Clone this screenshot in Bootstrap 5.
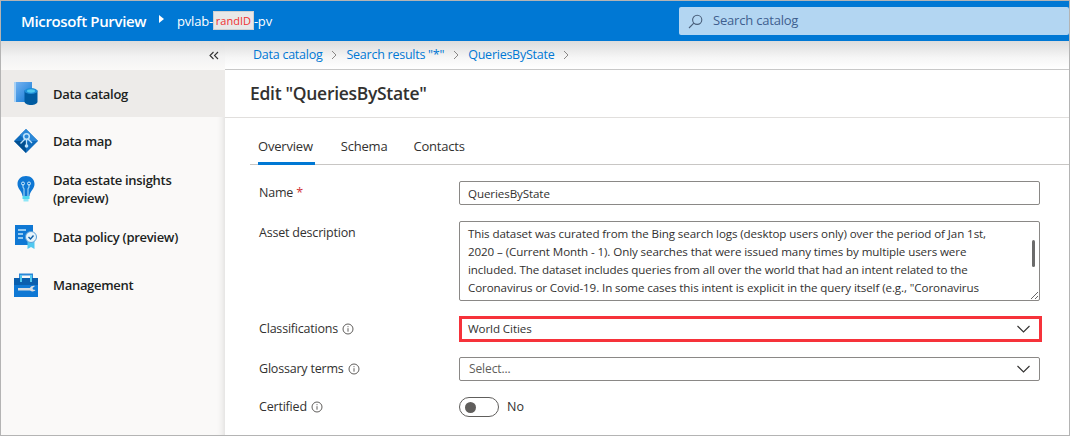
<!DOCTYPE html>
<html lang="en">
<head>
<meta charset="utf-8">
<title>Microsoft Purview</title>
<link href="https://cdn.jsdelivr.net/npm/bootstrap@5.3.0/dist/css/bootstrap.min.css" rel="stylesheet">
<style>
html,body{height:436px;overflow:hidden}
body{font-family:"Open Sans","Noto Sans",sans-serif;font-size:13px;color:#323130;background:#fff}
.frame{height:436px;border:1px solid #b4b4b4;border-bottom-width:1px;display:flex;flex-direction:column;overflow:hidden}
.topbar{height:40px;background:#0078d4;color:#fff;flex:none;padding-left:20px;position:relative;z-index:2}
.brand{font-weight:600;font-size:15px;letter-spacing:-.35px;width:136px}
.caret{width:0;height:0;border-left:5px solid #fff;border-top:4px solid transparent;border-bottom:4px solid transparent;margin:-4px 0 0 2px}
.tenant{margin-left:13px;font-size:13px;letter-spacing:-.2px}
.rand{display:inline-block;background:#e8e8e8;border:1px solid #d0d0d0;color:#f03030;font-size:11px;line-height:17px;width:41px;text-align:center;letter-spacing:0;vertical-align:1px}
.searchbox{width:390px;height:28px;margin-left:auto;background:#b3d6f2;border-radius:2px;color:#3f5f8f;font-size:13px;padding-left:9px;gap:10px;letter-spacing:-.2px}
.body-row{flex:1;min-height:0}
.sidenav{width:224px;flex:none;background:#faf9f8;box-shadow:inset -8px 0 8px -8px rgba(0,0,0,.16)}
.collapse-row{height:29px;padding-right:6px;background:linear-gradient(#dcdcdc,#f3f3f3 55%,#faf9f8);font-size:14px;color:#444}
.nav-entry{height:48px;padding-left:12px;gap:14px;color:#201f1e;font-size:13px;font-weight:600;line-height:18px;letter-spacing:-.3px}
.nav-entry svg{flex:none;width:26px;height:26px}
.nav-entry.current{background:#edebe9;height:47px}
.crumbs{height:29px;flex:none;border-bottom:1px solid #c8c8c8;background:linear-gradient(#dcdcdc,#f6f6f6 60%,#fff);padding-left:28px;gap:9px;font-size:12.5px;letter-spacing:-.25px;color:#0078d4}
.crumbs svg{flex:none}
.title-row{height:48px;flex:none;border-bottom:1px solid #e1dfdd;padding-left:25px}
.title-row h1{font-size:17.5px;font-weight:600;margin:0;color:#323130;letter-spacing:-.3px}
.tabbar{margin:6px 0 0 25px;height:41px;border-bottom:1px solid #c8c6c4;gap:26px;padding-left:8px;flex:none}
.tabitem{height:40px;line-height:44px;font-size:13px;letter-spacing:-.2px;color:#323130;margin-bottom:-1px}
.tabitem.active-tab{border-bottom:3px solid #0078d4;height:41px;padding-right:2px}
.formrow{padding-left:34px;padding-right:29px}
.flabel{width:200px;flex:none;font-size:12.5px;letter-spacing:-.2px;color:#323130}
.req{color:#d13438}
.info{margin-left:3px;flex:none}
.fieldbox{flex:1;min-width:0;position:relative}
.form-control.flat,.form-select.flat{border-radius:2px;border-color:#8a8886;font-size:11.6px;color:#323130;padding:0 8px;height:24px;min-height:0;box-shadow:none;letter-spacing:-.1px}
textarea.form-control.flat{height:80px;line-height:17.9px;padding:3px 0 0 8px;overflow:hidden;resize:both;white-space:pre}
.thumb{position:absolute;right:5px;top:19px;width:3px;height:27px;background:#6b6b6b;border-radius:2px}
.redmark{border:3px solid #f6323a;height:26px;margin:0 -2px 0 0;padding-left:6px;font-size:11.6px;letter-spacing:-.1px;padding-right:9px}
.selectrow{height:24px;border:1px solid #8a8886;border-radius:2px;padding:0 9px;font-size:12px;letter-spacing:-.1px;color:#605e5c}
.toggle{width:40px;height:20px;border:1px solid #605e5c;border-radius:10px;padding-left:5px}
.knob{width:11px;height:11px;border-radius:50%;background:#605e5c}
</style>
</head>
<body>
<div class="frame">
  <header class="topbar d-flex align-items-center">
    <div class="brand">Microsoft Purview</div>
    <span class="caret"></span>
    <div class="tenant">pvlab-<span class="rand">randID</span>-pv</div>
    <div class="searchbox d-flex align-items-center">
      <svg width="15" height="15" viewBox="0 0 15 15" fill="none" stroke="#4a5f7a" stroke-width="1.1"><circle cx="9.2" cy="5.8" r="4.6"/><path d="M5.8 9.2 1 14"/></svg>
      <span>Search catalog</span>
    </div>
  </header>
  <div class="body-row d-flex">
    <nav class="sidenav">
      <div class="collapse-row d-flex align-items-center justify-content-end">
        <svg width="10" height="9" viewBox="0 0 10 9" fill="none" stroke="#333" stroke-width="1.1"><path d="M4.5 1 1 4.5 4.5 8M9 1 5.5 4.5 9 8"/></svg>
      </div>
      <div class="nav-entry current d-flex align-items-center">
        <svg viewBox="0 0 26 26"><defs><linearGradient id="g1" x1="0" y1="0" x2="1" y2="1"><stop offset="0" stop-color="#7ab5f2"/><stop offset="1" stop-color="#0f78d4"/></linearGradient></defs><rect x="1" y="1" width="18" height="20" fill="url(#g1)"/><rect x="1" y="1" width="2" height="20" fill="#a9d2f5"/><path d="M11.500 9.500v11c0 2 3 3.500 6.500 3.500s6.500-1.500 6.500-3.500v-11z" fill="#005ba1"/><ellipse cx="18" cy="10" rx="6.500" ry="3" fill="#1f8fd8"/><ellipse cx="18" cy="10" rx="4" ry="1.700" fill="#50c8f0"/></svg>
        <span>Data catalog</span>
      </div>
      <div class="nav-entry d-flex align-items-center">
        <svg viewBox="0 0 26 26"><path d="M13 1 25 13 13 25 1 13z" fill="#0f6cbd"/><path d="M13 1 25 13 13 13 7 7z" fill="#2b88d8"/><path d="M1 13 13 25 13 13z" fill="#004f91"/><circle cx="13.500" cy="8.500" r="2.800" fill="none" stroke="#bfe3fa" stroke-width="1.500"/><path d="M12 11 7.500 15.500M15 11 19 15M13.500 11v7" stroke="#bfe3fa" stroke-width="1.300"/><circle cx="13.500" cy="18" r="1.800" fill="#bfe3fa"/></svg>
        <span>Data map</span>
      </div>
      <div class="nav-entry d-flex align-items-center">
        <svg viewBox="0 0 26 26"><path d="M13 0c5 0 8.500 3.500 8.500 8 0 5-4.500 7-5 12h-7c-.5-5-5-7-5-12 0-4.500 3.500-8 8.500-8z" fill="#0f78d4"/><path d="M9.500 20h7v3h-7z" fill="#50d8f0"/><path d="M10.500 23h5v2.500h-5z" fill="#8ee6f7"/><path d="M10 8v3c0 1 1 1 1 2v7M16 8v3c0 1-1 1-1 2v7" fill="none" stroke="#a8d8f5" stroke-width="1.100"/><circle cx="10" cy="7.500" r="1.500" fill="none" stroke="#cfeafb"/><circle cx="16" cy="7.500" r="1.500" fill="none" stroke="#cfeafb"/></svg>
        <span>Data estate insights<br>(preview)</span>
      </div>
      <div class="nav-entry d-flex align-items-center">
        <svg viewBox="0 0 26 26"><rect x="2" y="1" width="18" height="20" fill="#0f78d4"/><path d="M5 6h8M5 10h5M5 14h5" stroke="#bfe3fa" stroke-width="1.300"/><path d="M14.500 17h7v8l-3.500-2-3.500 2z" fill="#50c8f0"/><circle cx="18" cy="13" r="5.500" fill="#e6f3fb" stroke="#5aa0d8"/><path d="M15.500 13l2 2 3-3.500" fill="none" stroke="#0f5fa8" stroke-width="1.400"/></svg>
        <span>Data policy (preview)</span>
      </div>
      <div class="nav-entry d-flex align-items-center">
        <svg viewBox="0 0 26 26"><path d="M7 6V2.500h12V6" fill="none" stroke="#2a88d8" stroke-width="2"/><rect x="1" y="6" width="24" height="19" fill="#0f78d4"/><rect x="1" y="6" width="24" height="7" fill="#0a5fae"/><rect x="7" y="3" width="2" height="7" fill="#50c8f0"/><rect x="17" y="3" width="2" height="7" fill="#50c8f0"/><path d="M5 16h12c.8-1.500 2.500-2.500 5-2l-2.500 2 .5 1.500 2.500 .5c-1.500 2-4 1.500-5.500 .5H5z" fill="#d8dde2"/></svg>
        <span>Management</span>
      </div>
    </nav>
    <main class="flex-grow-1 d-flex flex-column" style="min-width:0">
      <div class="crumbs d-flex align-items-center">
        <span>Data catalog</span>
        <svg width="6" height="10" viewBox="0 0 6 10" fill="none" stroke="#8a8886"><path d="M1 1l4 4-4 4"/></svg>
        <span>Search results "*"</span>
        <svg width="6" height="10" viewBox="0 0 6 10" fill="none" stroke="#8a8886"><path d="M1 1l4 4-4 4"/></svg>
        <span>QueriesByState</span>
        <svg width="6" height="10" viewBox="0 0 6 10" fill="none" stroke="#8a8886"><path d="M1 1l4 4-4 4"/></svg>
      </div>
      <div class="title-row d-flex align-items-center"><h1>Edit "QueriesByState"</h1></div>
      <div class="tabbar d-flex">
        <div class="tabitem active-tab">Overview</div>
        <div class="tabitem">Schema</div>
        <div class="tabitem">Contacts</div>
      </div>
      <div class="formrow d-flex align-items-center" style="margin-top:16px">
        <label class="flabel">Name <span class="req">*</span></label>
        <div class="fieldbox"><input class="form-control flat" value="QueriesByState"></div>
      </div>
      <div class="formrow d-flex align-items-start" style="margin-top:16px">
        <label class="flabel" style="padding-top:3px">Asset description</label>
        <div class="fieldbox"><textarea class="form-control flat">This dataset was curated from the Bing search logs (desktop users only) over the period of Jan 1st,
2020 – (Current Month - 1). Only searches that were issued many times by multiple users were
included. The dataset includes queries from all over the world that had an intent related to the
Coronavirus or Covid-19. In some cases this intent is explicit in the query itself (e.g., "Coronavirus
updates Seattle"), in other cases it is implicit, e.g. "Shelter in place".</textarea><span class="thumb"></span></div>
      </div>
      <div class="formrow d-flex align-items-center" style="margin-top:15px">
        <label class="flabel d-flex align-items-center">Classifications <svg class="info ms-1" width="12" height="12" viewBox="0 0 12 12" fill="none" stroke="#605e5c"><circle cx="6" cy="6" r="5"/><path d="M6 5.200v3.500M6 3.200v1"/></svg></label>
        <div class="fieldbox"><div class="redmark d-flex align-items-center justify-content-between"><span>World Cities</span><svg width="13" height="8" viewBox="0 0 13 8" fill="none" stroke="#323130" stroke-width="1.100"><path d="M.5 1l6 6 6-6"/></svg></div></div>
      </div>
      <div class="formrow d-flex align-items-center" style="margin-top:15px">
        <label class="flabel d-flex align-items-center">Glossary terms <svg class="info ms-1" width="12" height="12" viewBox="0 0 12 12" fill="none" stroke="#605e5c"><circle cx="6" cy="6" r="5"/><path d="M6 5.200v3.500M6 3.200v1"/></svg></label>
        <div class="fieldbox"><div class="selectrow d-flex align-items-center justify-content-between"><span>Select...</span><svg width="13" height="8" viewBox="0 0 13 8" fill="none" stroke="#323130" stroke-width="1.100"><path d="M.5 1l6 6 6-6"/></svg></div></div>
      </div>
      <div class="formrow d-flex align-items-center" style="margin-top:16px">
        <label class="flabel d-flex align-items-center">Certified <svg class="info ms-1" width="12" height="12" viewBox="0 0 12 12" fill="none" stroke="#605e5c"><circle cx="6" cy="6" r="5"/><path d="M6 5.200v3.500M6 3.200v1"/></svg></label>
        <div class="d-flex align-items-center gap-2"><div class="toggle d-flex align-items-center"><span class="knob"></span></div><span class="ms-0" style="font-size:12.500px">No</span></div>
      </div>
    </main>
  </div>
</div>
</body>
</html>
